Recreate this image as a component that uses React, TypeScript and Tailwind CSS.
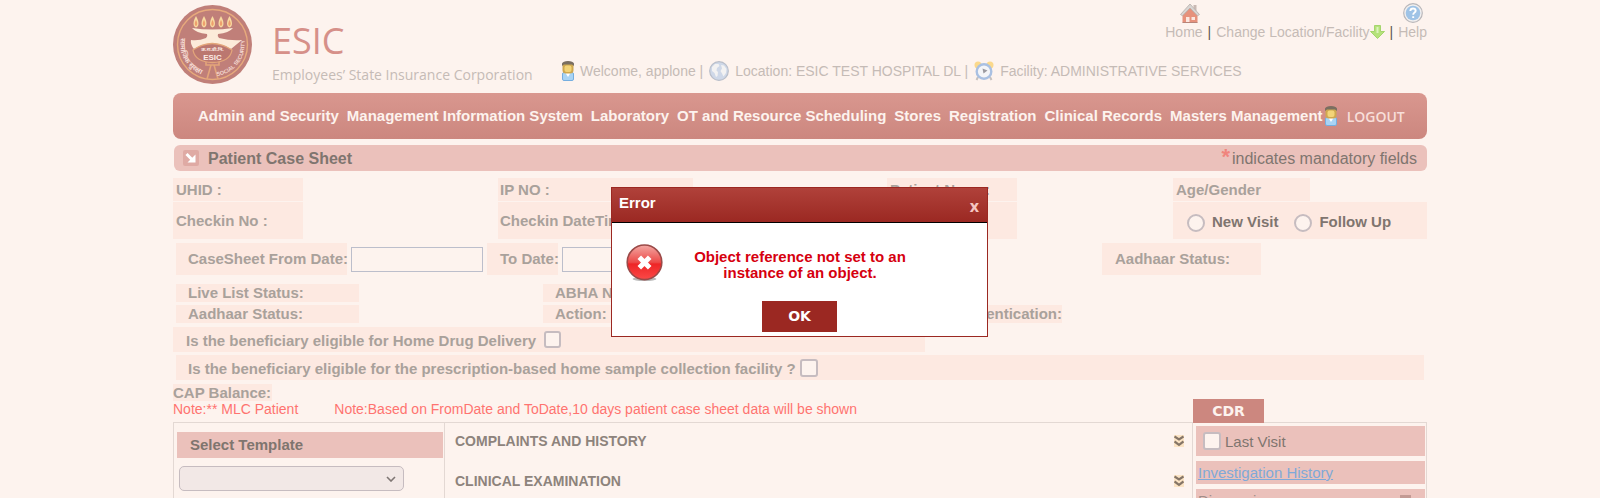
import React from "react";

const label = "bg-[#fde9e1] text-[#a9a19b] font-bold";

function Emblem() {
  const flames = [23, 31, 39.5, 48, 56.5];
  return (
    <svg viewBox="0 0 79 79" className="size-[79px] shrink-0" role="img" aria-label="ESIC emblem">
      <defs>
        <path id="arc-left" d="M8 33 A32 32 0 0 0 36 71" />
        <path id="arc-right" d="M44 71 A32 32 0 0 0 71 33" />
      </defs>
      <circle cx="39.5" cy="39.5" r="39.5" fill="#c07f79" />
      <circle cx="39.5" cy="39.5" r="35" fill="none" stroke="#e7aa7c" strokeWidth="1.4" />
      {flames.map((x) => (
        <g key={x}>
          <path
            d={`M${x} 11 C${x + 3.6} 17 ${x + 3} 22 ${x} 22.5 C${x - 3} 22 ${x - 3.6} 17 ${x} 11Z`}
            fill="#f8d9a0"
          />
          <path
            d={`M${x} 15 C${x + 1.8} 18 ${x + 1.4} 20.5 ${x} 21 C${x - 1.4} 20.5 ${x - 1.8} 18 ${x} 15Z`}
            fill="#ee9f6c"
          />
        </g>
      ))}
      <path d="M19 23 Q39 26 60 23 Q56 28 45 29 Q44 31 46 33 Q58 36 69 35 Q64 39 58 44 Q39 34 21 44 Q17 39 18 35 Q26 36 33 33 Q35 31 34 29 Q23 28 19 23Z" fill="#fcebd9" />
      <path d="M20 45 Q39 32 59 45 Q57 57 39.500 57.500 Q22 57 20 45Z" fill="#bb7770" stroke="#e3a57a" strokeWidth="1.300" />
      <path d="M33 57 L33 60 L46 60 L46 57 M38 60 L34 74 M41 60 L45 74" fill="none" stroke="#e3a57a" strokeWidth="1.600" />
      <text x="39.5" y="46" textAnchor="middle" fontSize="5" fontWeight="700" fill="#fbeae4" fontFamily="Noto Sans, sans-serif">क.रा.बी.नि.</text>
      <text x="39.5" y="54.500" textAnchor="middle" fontSize="8" fontWeight="700" fill="#fbeae4" fontFamily="Liberation Sans, sans-serif">ESIC</text>
      <text fontSize="7" fontWeight="700" fill="#f4d9d2" fontFamily="Noto Sans, sans-serif">
        <textPath href="#arc-left">सामाजिक सुरक्षा</textPath>
      </text>
      <text fontSize="5.500" fontWeight="700" fill="#f4d9d2" fontFamily="Liberation Sans, sans-serif">
        <textPath href="#arc-right">SOCIAL SECURITY</textPath>
      </text>
    </svg>
  );
}

function PersonIcon() {
  return (
    <svg viewBox="0 0 12 20" className="h-5 w-3 shrink-0" aria-hidden="true">
      <rect x="0.5" y="11.5" width="11" height="8" rx="1.5" fill="#a9d4f5" stroke="#75aee0" />
      <path d="M3.500 12h5l-2.500 4z" fill="#fff" />
      <rect x="0.500" y="2" width="11" height="10.500" rx="3.500" fill="#cfa84f" />
      <rect x="2.500" y="4.500" width="7" height="6.500" rx="2" fill="#f3d478" />
      <path d="M0 5V2.500Q1 0 6 0T12 2.500V5L10 3.500H2Z" fill="#7a6e60" />
    </svg>
  );
}

function GlobeIcon() {
  return (
    <svg viewBox="0 0 20 20" className="size-5 shrink-0" aria-hidden="true">
      <circle cx="10" cy="10" r="9.300" fill="#cfd8e8" stroke="#b9bec9" strokeWidth="1.200" />
      <path d="M3 6 6 3 9.500 3 10.500 5 8 7 7.500 9.500 9 11 8.500 15 7 16 5.500 12 3 10Z" fill="#f3f2f2" />
      <path d="M12 4 15 4.500 17.500 8 17 12 14.500 15.500 13 12.500 11.500 10 13 7.500Z" fill="#f3f2f2" />
    </svg>
  );
}

function ClockIcon() {
  return (
    <svg viewBox="0 0 20 20" className="size-5 shrink-0" aria-hidden="true">
      <circle cx="4" cy="4" r="3.500" fill="#fbd98c" />
      <circle cx="16" cy="4" r="3.500" fill="#fbd98c" />
      <path d="M4 16 2.500 19M16 16l1.500 3" stroke="#c5c0bf" strokeWidth="2" />
      <circle cx="10" cy="10.500" r="7.300" fill="#f4f5f8" stroke="#a9c0e2" strokeWidth="2.400" />
      <path d="M8.500 7.500 13.500 9.500 9.500 12.500Z" fill="#9b9aa0" />
    </svg>
  );
}

function HouseIcon() {
  return (
    <svg viewBox="0 0 20 20" className="size-5" aria-hidden="true">
      <rect x="13.500" y="2" width="3" height="6" fill="#c9b9b3" />
      <path d="M2.500 10 10 3.500 17.500 10V19.500H2.500Z" fill="#e6917c" />
      <path d="M0.500 11.500 10 1 19.500 11.500 17.500 12.800 10 5 2.500 12.800Z" fill="#d9d5d3" stroke="#b5aeab" strokeWidth="0.800" />
      <rect x="6" y="14" width="3.500" height="5.500" fill="#fbe7e0" />
      <rect x="11.500" y="14" width="3.500" height="3" fill="#fbe7e0" />
      <path d="M2.500 19.500H17.500" stroke="#b88478" />
    </svg>
  );
}

function HelpIcon() {
  return (
    <svg viewBox="0 0 20 20" className="size-5" aria-hidden="true">
      <circle cx="10" cy="10" r="9.300" fill="#f1efef" stroke="#b9b7ba" strokeWidth="1.200" />
      <circle cx="10" cy="10" r="7.300" fill="#9fc3e6" />
      <path d="M7.300 8Q7.500 5.500 10 5.500T12.700 7.800Q12.700 9 11.300 9.800 10.200 10.400 10.200 11.800M10.200 13.300V15" fill="none" stroke="#fff" strokeWidth="1.900" />
    </svg>
  );
}

function DownArrow() {
  return (
    <svg viewBox="0 0 15 14" className="h-3.5 w-[15px]" aria-hidden="true">
      <path d="M4.500 0.500h6v6h4L7.500 13.500 0.500 6.500h4z" fill="#b5e27b" stroke="#a5d56d" />
      <path d="M6.500 2h2v6h-2z" fill="#dcf3bd" />
    </svg>
  );
}

function ExpandIcon() {
  return (
    <svg viewBox="0 0 10 12" className="h-3 w-2.5" aria-hidden="true">
      <rect width="10" height="12" fill="#fbe3c4" />
      <path d="M0.500 1.500 5 4.500 9.500 1.500M0.500 6.500 5 9.800 9.500 6.500" fill="none" stroke="#857567" strokeWidth="2.200" />
    </svg>
  );
}

function ErrorIcon() {
  return (
    <svg viewBox="0 0 37 37" className="size-[37px] shrink-0" aria-hidden="true">
      <defs>
        <linearGradient id="err" x1="0" y1="0" x2="0" y2="1">
          <stop offset="0" stopColor="#f3a9a4" />
          <stop offset="0.500" stopColor="#ec4a48" />
          <stop offset="0.550" stopColor="#ee2526" />
          <stop offset="1" stopColor="#fb4a48" />
        </linearGradient>
      </defs>
      <ellipse cx="18.500" cy="35" rx="12" ry="2" fill="#b9b9b9" />
      <circle cx="18.500" cy="18.300" r="17.300" fill="url(#err)" stroke="#9a4a48" strokeWidth="1.600" />
      <path d="M13.300 13.300 23.700 23.700M23.700 13.300 13.300 23.700" stroke="#fff" strokeWidth="5" />
    </svg>
  );
}

function Header() {
  return (
    <header className="flex h-[93px] text-[14px] text-[#c5bbb6]">
      <div className="pt-[5px]">
        <Emblem />
      </div>
      <div className="ml-5 w-[290px] pt-5 font-['Open_Sans','Noto_Sans',sans-serif] whitespace-nowrap">
        <div className="text-[36px] leading-[42px] text-[#d69089]">ESIC</div>
        <div className="leading-[26px]">Employees’ State Insurance Corporation</div>
      </div>
      <div className="flex flex-1 flex-col whitespace-nowrap">
        <nav className="flex items-end justify-end gap-[5px] pt-[3px] leading-[18px]">
          <a href="#home" className="flex flex-col items-center">
            <span className="pl-3"><HouseIcon /></span>
            Home
          </a>
          <span className="text-[#5f5650]">|</span>
          <a href="#change" className="flex items-center">
            Change Location/Facility
            <DownArrow />
          </a>
          <span className="text-[#5f5650]">|</span>
          <a href="#help" className="flex flex-col items-center">
            <HelpIcon />
            Help
          </a>
        </nav>
        <div className="mt-5 flex items-center gap-1.5 leading-5">
          <PersonIcon />
          <span>Welcome, applone |</span>
          <GlobeIcon />
          <span>Location: ESIC TEST HOSPITAL DL |</span>
          <ClockIcon />
          <span>Facility: ADMINISTRATIVE SERVICES</span>
        </div>
      </div>
    </header>
  );
}

const menu = [
  "Admin and Security",
  "Management Information System",
  "Laboratory",
  "OT and Resource Scheduling",
  "Stores",
  "Registration",
  "Clinical Records",
  "Masters Management",
];

function MainMenu() {
  return (
    <nav className="flex h-[46px] items-center rounded-lg bg-linear-to-b from-[#d9978f] to-[#cc877f] pl-[25px] text-[15px] font-bold whitespace-nowrap text-[#fdf3ee]">
      <div className="flex gap-2">
        {menu.map((m) => (
          <a key={m} href="#menu">{m}</a>
        ))}
      </div>
      <a href="#logout" className="ml-0.5 flex items-center gap-2.5 font-['Open_Sans',sans-serif] text-[14px] font-semibold text-[#f8dfda]">
        <PersonIcon />
        LOGOUT
      </a>
    </nav>
  );
}

function TitleBar() {
  return (
    <div className="mt-1.5 ml-px flex h-[26px] items-center rounded-md bg-[#ebc1bb] pr-2.5 pl-[9px] text-[#7f756f]">
      <svg viewBox="0 0 16 16" className="size-4" aria-hidden="true">
        <rect width="16" height="16" rx="2" fill="#dfaaa4" />
        <path d="M3.500 4 9 9.500" stroke="#fff" strokeWidth="3" />
        <path d="M12.500 4.500V12.500H4.500Z" fill="#fff" />
      </svg>
      <h1 className="ml-[9px] pt-0.5 text-[16px] font-bold">Patient Case Sheet</h1>
      <div className="ml-auto flex text-[16px]">
        <span className="mr-0.5 text-[22px] leading-6 font-bold text-[#f0857d]">*</span>
        <span className="pt-0.5 leading-6">indicates mandatory fields</span>
      </div>
    </div>
  );
}

const box = "appearance-none border-2 border-[#c6bcc0] bg-[#fdf3ee]";

function PatientForm() {
  return (
    <form className="text-[15px] whitespace-nowrap">
      <div className="mt-[7px] grid grid-cols-[325px_389px_286px_1fr] gap-y-px">
        <div className={`${label} flex h-[23px] w-[130px] items-center pt-0.5 pl-[3px]`}>UHID :</div>
        <div className={`${label} flex h-[23px] w-[195px] items-center pt-0.5 pl-0.5`}>IP NO :</div>
        <div className={`${label} flex h-[23px] w-[130px] items-center pt-0.5 pl-[3px]`}>Patient Name:</div>
        <div className={`${label} flex h-[23px] w-[137px] items-center pt-0.5 pl-[3px]`}>Age/Gender</div>
        <div className={`${label} flex h-[37px] w-[130px] items-center pt-0.5 pl-[3px]`}>Checkin No :</div>
        <div className={`${label} flex h-[37px] w-[195px] items-center pt-0.5 pl-0.5`}>Checkin DateTime :</div>
        <div className={`${label} h-[37px] w-[130px]`} />
        <div className="flex h-[37px] items-center bg-[#fde9e1] pt-1 pl-3.5 font-bold text-[#7f756f]">
          <input id="new-visit" name="visit" type="radio" className={`${box} size-[18px] rounded-full`} />
          <label htmlFor="new-visit" className="ml-[7px]">New Visit</label>
          <input id="follow-up" name="visit" type="radio" className={`${box} ml-4 size-[18px] rounded-full`} />
          <label htmlFor="follow-up" className="ml-[7px]">Follow Up</label>
        </div>
      </div>

      <div className="mt-1 ml-[3px] flex h-8 items-center">
        <label htmlFor="from-date" className={`${label} flex h-8 w-[171px] items-center pl-3`}>CaseSheet From Date:</label>
        <input id="from-date" type="text" className="ml-1 h-[25px] w-[132px] border border-[#bcbecb] bg-transparent" />
        <label htmlFor="to-date" className={`${label} ml-1 flex h-8 w-[71px] items-center pl-[13px]`}>To Date:</label>
        <input id="to-date" type="text" className="ml-1 h-[25px] w-[132px] border border-[#bcbecb] bg-transparent" />
        <div className={`${label} mr-[166px] ml-auto flex h-8 w-[159px] items-center pl-[13px]`}>Aadhaar Status:</div>
      </div>

      <div className="mt-[9px] ml-[3px] grid grid-cols-[367px_326px_1fr] gap-y-[3px] leading-[18px]">
        <div className={`${label} w-[183px] pl-3`}>Live List Status:</div>
        <div className={`${label} w-[183px] pl-3`}>ABHA Number:</div>
        <div />
        <div className={`${label} w-[183px] pl-3`}>Aadhaar Status:</div>
        <div className={`${label} w-[183px] pl-3`}>Action:</div>
        <div className={`${label} w-[193px] text-right`}>Aadhaar Authentication:</div>
      </div>

      <div className={`${label} mt-1 flex h-[25px] w-[752px] items-center pl-[13px]`}>
        <label htmlFor="home-drug" className="pt-[3px]">Is the beneficiary eligible for Home Drug Delivery</label>
        <input id="home-drug" type="checkbox" className={`${box} ml-2 size-[17px] rounded-[3px]`} />
      </div>
      <div className={`${label} mx-[3px] mt-[3px] flex h-[25px] items-center pl-3`}>
        <label htmlFor="home-sample" className="pt-[3px]">Is the beneficiary eligible for the prescription-based home sample collection facility ?</label>
        <input id="home-sample" type="checkbox" className={`${box} ml-1 size-[18px] rounded-[3px]`} />
      </div>

      <div className={`${label} mt-1 w-[99px] leading-[17px]`}>CAP Balance:</div>
    </form>
  );
}

function CaseSheet() {
  return (
    <>
      <div className="flex h-[21px] items-end justify-between whitespace-nowrap">
        <div className="flex gap-9 self-start text-[14px] leading-4 text-[#ff7370]">
          <span>Note:** MLC Patient</span>
          <span>Note:Based on FromDate and ToDate,10 days patient case sheet data will be shown</span>
        </div>
        <button type="button" className="z-10 mr-[163px] -mb-px h-6 w-[71px] shrink-0 bg-[#cc877f] font-['DejaVu_Sans',sans-serif] text-[14px] leading-6 font-bold text-[#fdf3ee]">
          CDR
        </button>
      </div>
      <div className="grid grid-cols-[270px_1fr_233px] border border-[#e3d8d3]">
        <div className="pt-[9px] pl-[3px]">
          <label htmlFor="template" className="mr-px flex h-[26px] items-center bg-[#ebc1bb] pl-[13px] text-[15px] font-bold text-[#7f756f]">
            Select Template
          </label>
          <div className="relative mt-2 ml-0.5 w-[225px]">
            <select id="template" className="block h-[25px] w-full appearance-none rounded-[5px] border border-[#c6bcc0] bg-[#f2e8e6]">
              <option></option>
            </select>
            <svg viewBox="0 0 10 6" className="absolute top-2.5 right-2 h-1.5 w-2.5" aria-hidden="true">
              <path d="M1 1 5 5 9 1" fill="none" stroke="#7f7674" strokeWidth="1.600" />
            </svg>
          </div>
        </div>
        <div className="border-x border-[#e3d8d3] pr-2 pl-2.5 text-[14px] font-bold text-[#8d837c]">
          {["COMPLAINTS AND HISTORY", "CLINICAL EXAMINATION"].map((t) => (
            <button key={t} type="button" className="flex h-10 w-full items-center justify-between pb-1">
              {t}
              <ExpandIcon />
            </button>
          ))}
        </div>
        <div className="pt-[3px] pr-px pl-[3px] text-[15px]">
          <div className="flex h-[30px] items-center bg-[#ebc1bb] pl-[7px] text-[#7f756f]">
            <input id="last-visit" type="checkbox" className={`${box} size-[18px] rounded-[3px]`} />
            <label htmlFor="last-visit" className="ml-1 pt-0.5">Last Visit</label>
          </div>
          <div className="mt-[5px] h-[23px] bg-[#ebc1bb] pl-0.5 leading-6">
            <a href="#investigations" className="text-[#7fa9d8] underline">Investigation History</a>
          </div>
          <div className="mt-[5px] flex h-[23px] justify-between bg-[#ebc1bb] pr-3.5 pl-0.5 leading-6 text-[#a08d88]">
            Diagnosis
            <span className="mt-1.5 size-[11px] bg-[#c39a94]" />
          </div>
        </div>
      </div>
    </>
  );
}

function ErrorDialog() {
  return (
    <div className="absolute inset-0 flex items-start justify-center pt-[187px] pr-px">
      <div role="alertdialog" aria-labelledby="dialog-title" className="w-[377px] border border-[#9b2822] bg-white text-[15px] font-bold">
        <div className="flex h-[35px] justify-between border-b border-black bg-linear-to-b from-[#b0413a] to-[#9b2822] pr-2 pl-[7px] text-white">
          <h2 id="dialog-title" className="leading-[29px]">Error</h2>
          <button type="button" aria-label="Close" className="mt-0.5 self-center font-['Open_Sans',sans-serif] text-[16px] leading-4 text-[#f5c5c1]">x</button>
        </div>
        <div className="flex items-start pt-[21px] pl-3.5">
          <ErrorIcon />
          <p className="mt-[5px] ml-7 w-[218px] text-center leading-4 text-[#d6000f]">
            Object reference not set to an instance of an object.
          </p>
        </div>
        <div className="flex justify-center pt-5 pb-1">
          <button type="button" className="h-[31px] w-[75px] bg-[#9b2822] font-['DejaVu_Sans',sans-serif] text-[14px] text-white">OK</button>
        </div>
      </div>
    </div>
  );
}

export default function App() {
  return (
    <div className="relative h-screen overflow-hidden bg-[#fdf3ee] font-['Liberation_Sans',Arial,sans-serif]">
      <div className="mx-auto max-w-[1254px]">
        <Header />
        <MainMenu />
        <TitleBar />
        <PatientForm />
        <CaseSheet />
      </div>
      <ErrorDialog />
    </div>
  );
}
